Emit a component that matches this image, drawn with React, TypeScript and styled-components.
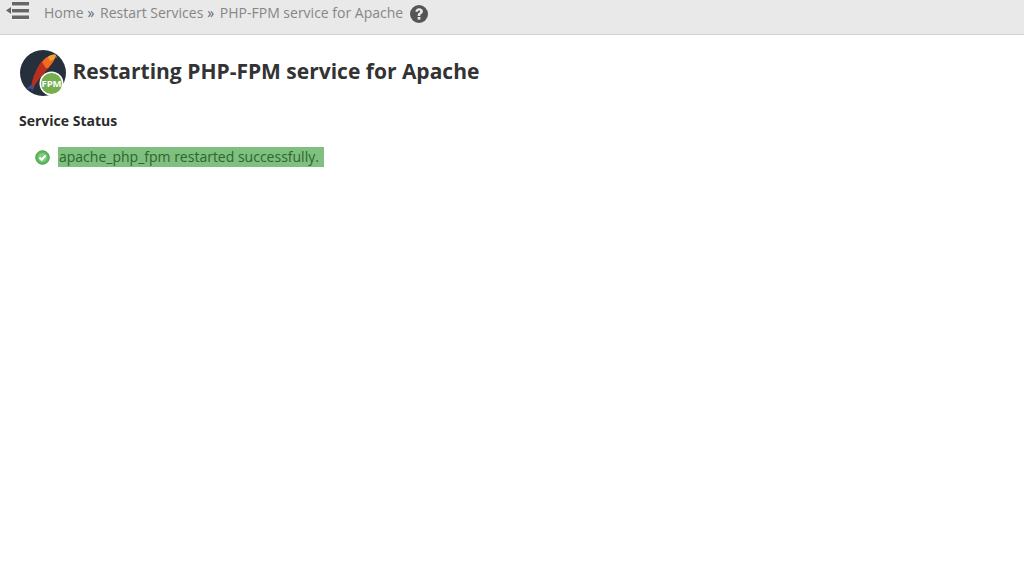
import React from "react";
import styled, { createGlobalStyle } from "styled-components";

const Global = createGlobalStyle`
  html, body { margin: 0; padding: 0; background: #fff; height: 100%; overflow: hidden; }
  body { font-family: "Open Sans", "Noto Sans", sans-serif; font-size: 14px; color: #333; }
`;

const TopBar = styled.header`
  box-sizing: border-box;
  background: #e9e9e9;
  border-bottom: 1px solid #d0d0d0;
  height: 35px;
  display: flex;
  align-items: flex-start;
  padding-left: 6px;
`;

const MenuToggle = styled.svg`
  width: 24px;
  height: 20px;
  margin-top: 1px;
  flex: none;
  filter: drop-shadow(0 1px 0 #f6f6f6);
`;

const Crumbs = styled.nav`
  display: flex;
  align-items: center;
  height: 24px;
  margin-left: 14px;
  font-size: 14px;
  color: #7b7b7b;
  white-space: nowrap;
`;

const Crumb = styled.span`
  color: #868686;
`;

const Sep = styled.span`
  color: #5a6a7a;
  margin: 0 5.500px 0 4px;
`;

const Help = styled.svg`
  width: 18px;
  height: 18px;
  margin: 3px 0 0 6.500px;
  flex: none;
`;

const Main = styled.main`
  padding: 15px 0 0 19px;
`;

const TitleRow = styled.div`
  display: flex;
  align-items: center;
  gap: 5.500px;
  height: 46px;
`;

const Logo = styled.svg`
  width: 48px;
  height: 48px;
  flex: none;
`;

const Title = styled.h1`
  margin: -4px 0 0;
  font-size: 21px;
  font-weight: 700;
  color: #333;
  line-height: 30px;
`;

const SectionHead = styled.h2`
  margin: 15px 0 0;
  font-size: 14px;
  font-weight: 700;
  line-height: 20px;
  color: #2b2b2b;
`;

const StatusRow = styled.div`
  display: flex;
  align-items: center;
  margin: 16px 0 0 16px;
  height: 20px;
`;

const StatusIcon = styled.svg`
  width: 15px;
  height: 15px;
  flex: none;
`;

const Message = styled.span`
  margin-left: 8px;
  background: #7fbf7f;
  color: #2b662b;
  font-size: 14px;
  line-height: 20px;
  height: 20px;
  padding: 0 5px 0 1px;
`;

export default function App() {
  return (
    <>
      <Global />
      <TopBar>
        <MenuToggle viewBox="0 0 24 20">
          <polygon points="0,9.500 5,6 5,13" fill="#666" />
          <rect x="6" y="1" width="17" height="3.500" fill="#666" />
          <rect x="6" y="8" width="17" height="3.500" fill="#666" />
          <rect x="6" y="14.500" width="17" height="3.500" fill="#666" />
        </MenuToggle>
        <Crumbs>
          <Crumb>Home</Crumb>
          <Sep>»</Sep>
          <Crumb>Restart Services</Crumb>
          <Sep>»</Sep>
          <Crumb>PHP-FPM service for Apache</Crumb>
          <Help viewBox="0 0 18 18">
            <circle cx="9" cy="9" r="9" fill="#555" />
            <path d="M5.400 6.800C5.500 4.600 7 3.300 9.200 3.300c2.200 0 3.700 1.300 3.700 3.100 0 1.300-.7 2-1.600 2.600-.8.500-1 .8-1 1.400v.5H7.700v-.7c0-1.100.4-1.800 1.300-2.400.8-.5 1.100-.8 1.100-1.300 0-.6-.4-1-1-1-.7 0-1.100.4-1.200 1.300H5.400z" fill="#e9e9e9" />
            <rect x="7.700" y="12" width="2.700" height="2.600" fill="#e9e9e9" />
          </Help>
        </Crumbs>
      </TopBar>
      <Main>
        <TitleRow>
          <Logo viewBox="0 0 48 48">
            <circle cx="24" cy="24" r="23" fill="#25303c" />
            <path d="M36 7c-6-1-11 2-16 9-4 7-7 14-8 23l2 1c2-5 5-9 9-13 5-6 10-11 13-20z" fill="#b5301f" />
            <path d="M37 6c-5-1-10 2-14 7l3 5c2 2 3 1 4 0 3-3 6-7 7-12z" fill="#ef6a23" />
            <path d="M37 6c-3-1-6 0-8 2l2 4c3-1 5-2 6-6z" fill="#f3a32c" />
            <path d="M12 36l-5 4 5-.500 1 3 2-5z" fill="#3f4f9a" />
            <circle cx="37" cy="8" r="0.800" fill="#9aa4ad" />
            <circle cx="32.500" cy="34.500" r="12" fill="#fff" />
            <circle cx="32.500" cy="34.500" r="10.500" fill="#76ad4f" />
            <text x="32.500" y="38" textAnchor="middle" fontSize="9.500" fontWeight="700" fontFamily="Open Sans" fill="#fff">FPM</text>
          </Logo>
          <Title>Restarting PHP-FPM service for Apache</Title>
        </TitleRow>
        <SectionHead>Service Status</SectionHead>
        <StatusRow>
          <StatusIcon viewBox="0 0 15 15">
            <circle cx="7.500" cy="7.500" r="6.800" fill="#5cb85c" stroke="#4aa04a" />
            <circle cx="7.500" cy="7.500" r="4.600" fill="#7ecb7e" />
            <path d="M4.500 7.500l2.200 2.200 3.900-4.200" fill="none" stroke="#fff" strokeWidth="2" />
          </StatusIcon>
          <Message>apache_php_fpm restarted successfully.</Message>
        </StatusRow>
      </Main>
    </>
  );
}
